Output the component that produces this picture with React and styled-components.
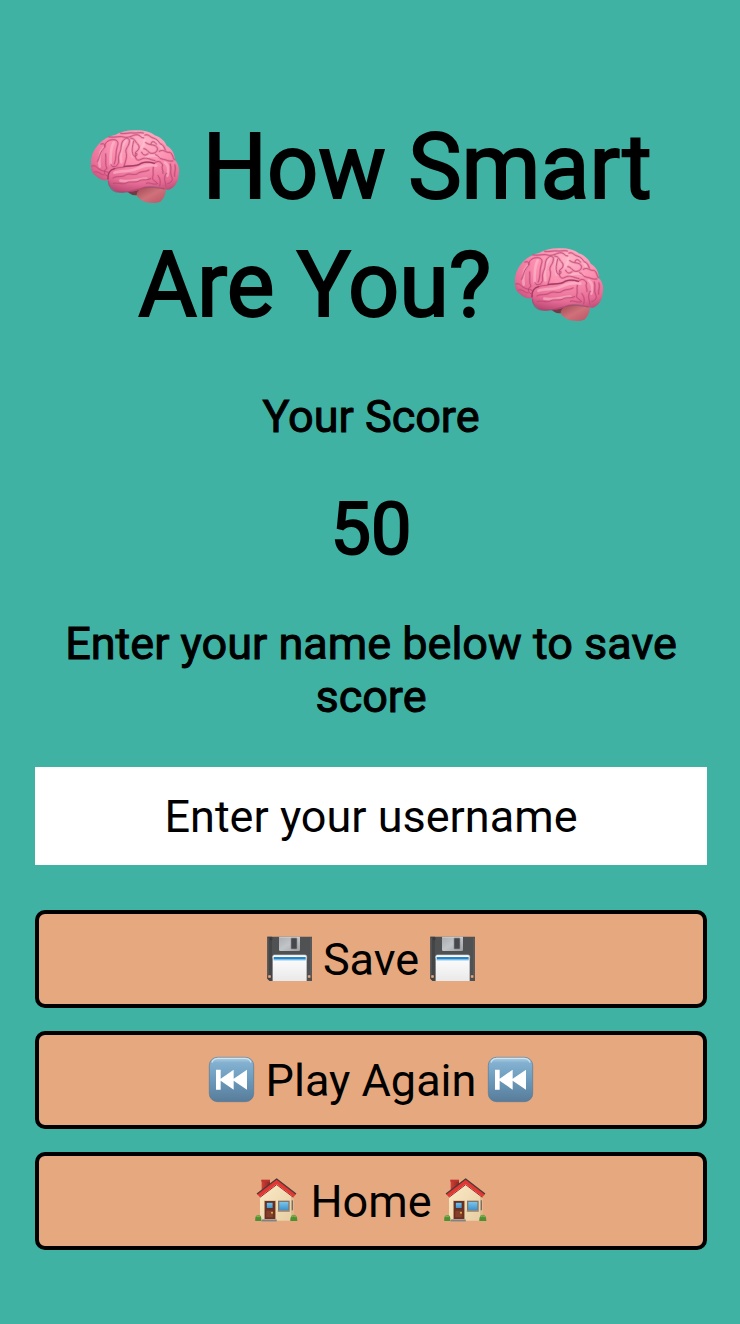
import React from "react";
import styled, { createGlobalStyle } from "styled-components";

const GlobalStyle = createGlobalStyle`
  *, *::before, *::after { box-sizing: border-box; }
  body {
    margin: 0;
    background: #3fb2a3;
    color: #000;
    font-family: Roboto, sans-serif;
    font-size: 45px;
    line-height: 53px;
  }
`;

const Page = styled.main`
  min-height: 100vh;
  padding: 109px 33px 74px 35px;
  display: flex;
  flex-direction: column;
  gap: 45px;
  text-align: center;
`;

const Title = styled.h1`
  margin: 0;
  font-size: 90px;
  line-height: 118px;
  font-weight: 400;
  -webkit-text-stroke: 2px #000;
`;

const Label = styled.h2`
  margin: 0;
  font-size: 45px;
  line-height: 53px;
  font-weight: 400;
  -webkit-text-stroke: 1px #000;
`;

const Score = styled.p`
  margin: 0;
  font-size: 72px;
  line-height: 84px;
  font-weight: 400;
  -webkit-text-stroke: 2px #000;
`;

const Form = styled.form`
  display: flex;
  flex-direction: column;
  gap: 45px;
`;

const NameField = styled.label`
  display: flex;
  flex-direction: column;
  gap: 44px;
`;

const NameInput = styled.input`
  width: 100%;
  height: 98px;
  padding: 0 20px;
  border: 0;
  border-radius: 0;
  background: #fff;
  color: #000;
  font: inherit;
  text-align: center;
  &::placeholder { color: #000; opacity: 1; }
`;

const Actions = styled.div`
  display: flex;
  flex-direction: column;
  gap: 23px;
`;

const ActionButton = styled.button`
  width: 100%;
  height: 98px;
  padding: 0 20px;
  border: 4px solid #000;
  border-radius: 10px;
  background: #e6a87e;
  color: #000;
  font: inherit;
  cursor: pointer;
`;

const Emoji = styled.svg`
  display: inline-block;
  width: 1em;
  height: 1em;
  vertical-align: -0.15em;
  overflow: visible;
`;

const Defs = styled.svg`
  display: block;
  position: absolute;
  width: 0;
  height: 0;
`;

const brainShape =
  "M24 124C23 105 34 84 45 72C56 58 78 45 96 42C112 32 136 27 158 28C180 27 202 32 215 43C232 48 246 61 251 74C268 82 276 102 276 118C287 128 291 146 287 162C286 181 277 196 266 202C259 208 251 207 242 204C220 199 200 193 182 200C166 209 150 213 132 212C116 216 99 215 89 204C79 197 75 188 75 178C62 180 47 174 39 165C27 158 22 145 24 124Z";

function SharedPaints() {
  return (
    <Defs aria-hidden="true">
      <defs>
        <radialGradient id="brainPink" cx="0.6" cy="0.18" r="0.85">
          <stop offset="0" stopColor="#ffb3c7" />
          <stop offset="0.45" stopColor="#fb8fb0" />
          <stop offset="0.8" stopColor="#e66c95" />
          <stop offset="1" stopColor="#b84873" />
        </radialGradient>
        <linearGradient id="stemPink" x1="0" y1="0" x2="1" y2="1">
          <stop offset="0" stopColor="#9b4951" />
          <stop offset="0.5" stopColor="#d0717a" />
          <stop offset="1" stopColor="#b95567" />
        </linearGradient>
        <linearGradient id="diskPaper" x1="0" y1="0" x2="0" y2="1">
          <stop offset="0" stopColor="#ffffff" />
          <stop offset="1" stopColor="#e9e9e9" />
        </linearGradient>
        <linearGradient id="diskMetal" x1="0" y1="0" x2="1" y2="1">
          <stop offset="0" stopColor="#a8acb0" />
          <stop offset="0.5" stopColor="#c2c5c7" />
          <stop offset="1" stopColor="#9ea1a4" />
        </linearGradient>
        <linearGradient id="tileBlue" x1="0" y1="0" x2="0" y2="1">
          <stop offset="0" stopColor="#b5d6e9" />
          <stop offset="0.12" stopColor="#84b1d0" />
          <stop offset="0.5" stopColor="#6c9bbd" />
          <stop offset="1" stopColor="#587c99" />
        </linearGradient>
        <linearGradient id="houseWall" x1="0" y1="0" x2="1" y2="1">
          <stop offset="0" stopColor="#fbecc8" />
          <stop offset="1" stopColor="#e7cda2" />
        </linearGradient>
        <linearGradient id="houseBrick" x1="0" y1="0" x2="1" y2="0">
          <stop offset="0" stopColor="#d04038" />
          <stop offset="1" stopColor="#932520" />
        </linearGradient>
        <linearGradient id="houseGlass" x1="0" y1="0" x2="0" y2="1">
          <stop offset="0" stopColor="#7bc4ea" />
          <stop offset="1" stopColor="#3e93cb" />
        </linearGradient>
      </defs>
    </Defs>
  );
}

const brainFolds = [
  "M54 69C67 65 70 75 61 84C49 98 49 111 44 121",
  "M65 77C65 65 75 57 89 56C103 55 108 64 103 76C96 95 102 112 94 129",
  "M68 99C70 118 65 132 72 142C62 148 61 159 71 164",
  "M27 135C40 130 42 144 55 148C62 151 71 151 76 155",
  "M35 153C45 149 49 159 63 162",
  "M84 131C85 140 101 139 104 130C111 124 102 113 109 98C118 81 111 67 123 56C132 48 141 52 139 63C137 78 124 84 130 97C133 111 126 123 123 136",
  "M152 60C148 77 145 88 150 101C154 110 165 105 161 97",
  "M78 48C98 51 111 43 126 49C144 50 146 42 162 41C173 42 172 51 182 51",
  "M113 37C125 40 138 34 152 36C163 37 171 33 181 36",
  "M143 51C159 54 155 62 164 69C171 76 170 86 158 93C154 113 162 122 174 115C189 106 202 117 216 119",
  "M186 42C198 38 200 49 211 51C220 54 227 60 231 68C240 70 245 80 247 87",
  "M188 65C197 73 211 70 218 75C230 84 220 96 210 97C196 100 194 83 183 83",
  "M195 98C187 106 179 102 176 94",
  "M204 69C206 57 216 62 220 69",
  "M229 91C242 82 248 96 259 94C268 94 269 109 274 116",
  "M218 101C229 105 229 115 241 115C251 116 257 123 269 120",
  "M75 174C73 157 82 146 95 143C109 137 119 142 130 136C150 134 163 137 174 127C188 121 205 124 214 127C225 116 235 123 239 132C234 143 242 149 240 157",
  "M90 171C101 163 117 171 130 161C144 155 155 167 168 155C180 150 188 153 198 147",
  "M90 188C103 182 115 193 130 186C144 178 158 188 171 178C184 174 192 179 203 173",
  "M211 139C208 151 213 158 209 169C207 180 218 179 223 187",
  "M225 164C233 175 233 184 230 195",
  "M262 129C267 143 260 152 265 165C272 177 265 186 254 188",
  "M250 157C240 170 247 181 249 196",
  "M276 132C280 148 273 152 275 166",
  "M190 187C198 181 211 194 223 188",
].join("");

function Brain() {
  return (
    <Emoji viewBox="21 3 270 270" aria-hidden="true">
      <path d="M128 205C138 221 151 225 164 222L185 198Z" fill="#743945" />
      <path d="M161 219C166 203 183 195 203 197L248 204C250 216 243 233 232 242C215 249 187 246 174 236C165 230 160 225 161 219Z" fill="url(#stemPink)" />
      <path d={brainShape} fill="url(#brainPink)" />
      <path d="M76 179C76 197 88 212 106 213C126 215 148 212 170 204C200 190 226 202 244 204" fill="none" stroke="#a83f6c" strokeWidth="4" opacity="0.6" />
      <g fill="none" stroke="#ffc6d6" strokeWidth="8" strokeLinecap="round" opacity="0.5">
        <path d="M62 80C49 94 47 116 50 137" />
        <path d="M92 64C82 83 82 109 83 130" />
        <path d="M128 56C115 76 111 102 115 124" />
        <path d="M149 56C147 72 145 92 149 106" />
        <path d="M178 47C189 57 184 73 174 82" />
        <path d="M216 57C230 66 237 75 238 88" />
        <path d="M188 110C203 100 219 103 230 108" />
        <path d="M94 155C118 148 143 153 162 143C184 133 201 130 220 134" />
        <path d="M112 179C140 184 168 174 190 173" />
        <path d="M246 125C257 132 256 151 253 164" />
      </g>
      <g fill="none" strokeLinecap="round" strokeLinejoin="round">
        <path d={brainFolds} stroke="#d65b87" strokeWidth="7" opacity="0.35" />
        <path d={brainFolds} stroke="#b2446f" strokeWidth="3" opacity="0.7" />
        <path d="M123 136C145 134 163 137 174 127C188 121 205 124 214 127M75 174C73 157 82 146 95 143" stroke="#8f3158" strokeWidth="4" opacity="0.7" />
      </g>
    </Emoji>
  );
}

function Floppy() {
  return (
    <Emoji viewBox="21 18 135 135" aria-hidden="true">
      <path d="M22 20H156V153H29L22 146Z" fill="#505153" />
      <path d="M22 20H36V153H29L22 146Z" fill="#444547" />
      <path d="M24 24V144M153 24V144" stroke="#68696b" strokeWidth="2" />
      <path d="M57 20H120V59Q120 63 116 63H61Q57 63 57 59Z" fill="url(#diskMetal)" />
      <path d="M58 22H119" stroke="#d4d6d7" strokeWidth="2" />
      <rect x="93" y="24" width="18" height="33" rx="2" fill="#45474a" stroke="#888b8e" strokeWidth="2" />
      <path d="M38 153V80Q38 75 43 75H135Q140 75 140 80V153Z" fill="url(#diskPaper)" />
      <path d="M38 85V80Q38 75 43 75H135Q140 75 140 80V85" fill="none" stroke="#c9cbcd" strokeWidth="2" />
      <rect x="41" y="81" width="96" height="8" fill="#2485c8" />
      <path d="M41 90H137" stroke="#93c6ea" strokeWidth="3" />
      <rect x="24" y="135" width="9" height="9" rx="2" fill="#e6a87e" stroke="#343536" strokeWidth="1" />
      <rect x="143" y="135" width="9" height="9" rx="2" fill="#e6a87e" stroke="#343536" strokeWidth="1" />
      <path d="M36 22V29H31V22" fill="none" stroke="#303133" strokeWidth="2" />
    </Emoji>
  );
}

function Rewind() {
  return (
    <Emoji viewBox="30 33 135 135" aria-hidden="true">
      <rect x="31" y="34" width="133" height="133" rx="24" fill="url(#tileBlue)" stroke="#54799a" strokeWidth="2" />
      <path d="M39 50Q42 38 57 37H138Q153 38 156 50" fill="none" stroke="#d7eaf3" strokeWidth="4" opacity="0.8" />
      <path d="M51 71H65V98L104 71V98L144 71V131L104 104V131L65 104V131H51Z" fill="#fff" />
    </Emoji>
  );
}

function House() {
  return (
    <Emoji viewBox="16 22 135 135" aria-hidden="true">
      <path d="M39 28H64V55L39 75Z" fill="url(#houseBrick)" />
      <path d="M38 27H64V33H38Z" fill="#bd352e" />
      <path d="M34 76L84 35L134 76V150H34Z" fill="url(#houseWall)" />
      <path d="M130 75V149" stroke="#cda879" strokeWidth="3" />
      <path d="M25 70L84 25L142 70L135 79L84 40L33 79Z" fill="#e23732" />
      <path d="M25 70L84 25L142 70" fill="none" stroke="#4d3938" strokeWidth="4" strokeLinejoin="round" />
      <path d="M34 80L84 42L134 80" fill="none" stroke="#a92025" strokeWidth="3" />
      <rect x="46" y="89" width="36" height="57" fill="#d9c09b" />
      <rect x="48" y="91" width="32" height="55" fill="#71301f" />
      <rect x="53" y="95" width="20" height="18" fill="url(#houseGlass)" stroke="#4b2825" strokeWidth="2" />
      <path d="M52 119H74V141H52Z" fill="#84402c" stroke="#602618" strokeWidth="1" />
      <circle cx="70" cy="126" r="3" fill="#e5b44a" />
      <rect x="88" y="90" width="35" height="33" fill="#81746d" />
      <rect x="92" y="94" width="27" height="24" fill="url(#houseGlass)" />
      <path d="M87 121H124" stroke="#b09a83" strokeWidth="3" />
      <path d="M131 89V119" stroke="#796e66" strokeWidth="4" />
      <path d="M41 145H84V153H38Z" fill="#a9a29a" />
      <path d="M39 150H84" stroke="#7f7a75" strokeWidth="3" />
      <path d="M20 151C18 141 22 132 30 133C37 134 39 140 38 151Z" fill="#4f8e32" />
      <path d="M125 151C124 141 128 132 136 132C144 134 146 140 146 151Z" fill="#4f8e32" />
      <path d="M24 139Q28 133 33 139M129 139Q135 132 141 139" fill="none" stroke="#80b54d" strokeWidth="4" />
    </Emoji>
  );
}

function Action({ icon: Icon, type = "button", children }) {
  return (
    <ActionButton type={type}>
      <Icon /> {children} <Icon />
    </ActionButton>
  );
}

export default function App() {
  return (
    <>
      <GlobalStyle />
      <SharedPaints />
      <Page>
        <Title>
          <Brain /> How Smart Are You? <Brain />
        </Title>
        <Label>Your Score</Label>
        <Score>50</Score>
        <Form onSubmit={(event) => event.preventDefault()}>
          <NameField>
            <Label as="span">Enter your name below to save score</Label>
            <NameInput name="username" placeholder="Enter your username" autoComplete="off" />
          </NameField>
          <Actions>
            <Action icon={Floppy} type="submit">Save</Action>
            <Action icon={Rewind}>Play Again</Action>
            <Action icon={House}>Home</Action>
          </Actions>
        </Form>
      </Page>
    </>
  );
}
